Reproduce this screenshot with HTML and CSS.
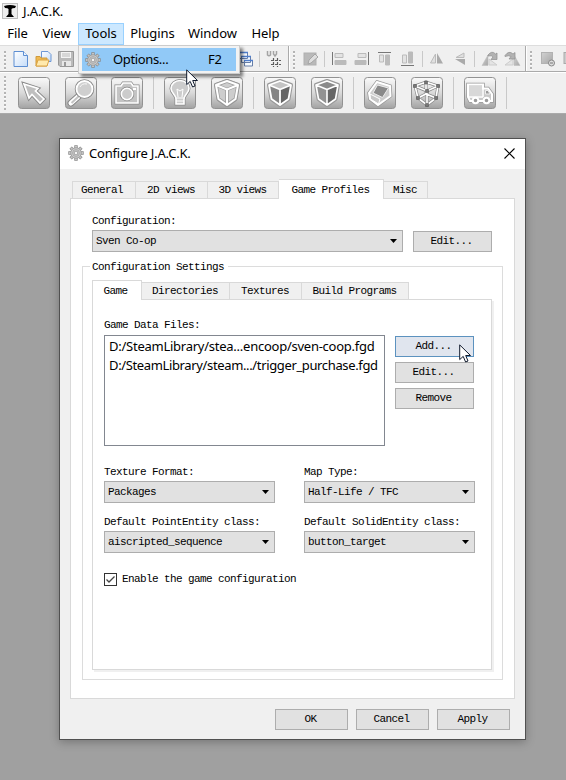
FILE: index.html
```
<!DOCTYPE html>
<html lang="en">
<head>
<meta charset="utf-8">
<title>J.A.C.K.</title>
<link rel="stylesheet" href="styles.css">
</head>
<body>
<svg width="0" height="0" class="defs">
  <defs>
    <linearGradient id="btn" x1="0" y1="0" x2="0" y2="1"><stop offset="0" stop-color="#fafafa"/><stop offset=".5" stop-color="#d9d9d9"/><stop offset="1" stop-color="#a2a2a2"/></linearGradient>
    <linearGradient id="gray" x1="0" y1="0" x2="1" y2="1"><stop offset="0" stop-color="#d2d2d2"/><stop offset="1" stop-color="#a6a6a6"/></linearGradient>
    <linearGradient id="page" x1="0" y1="0" x2="1" y2="1"><stop offset="0" stop-color="#fff"/><stop offset="1" stop-color="#c5dcf8"/></linearGradient>
    <g id="frame"><rect x=".5" y=".5" width="31" height="31" rx="3" fill="url(#btn)" stroke="#929292"/></g>
    <g id="gear">
      <g fill="none" stroke="#8b8b8b" stroke-width="3.4"><path d="M8 .3V15.7M.3 8H15.7M2.6 2.6L13.4 13.4M13.4 2.6L2.6 13.4"/></g>
      <g fill="none" stroke="#c4c4c4" stroke-width="2"><path d="M8 1V15M1 8H15M3 3L13 13M13 3L3 13"/></g>
      <circle cx="8" cy="8" r="5.3" fill="#c9c9c9" stroke="#999" stroke-width=".8"/>
      <circle cx="8" cy="8" r="3.3" fill="#dedede" stroke="#999" stroke-width=".8"/>
      <circle cx="8" cy="8" r="1.9" fill="#f4f4f4" stroke="#888" stroke-width=".8"/>
    </g>
    <path id="cube-edge" d="M5 8L16 4L27 8L24.500 22L16 28L7.500 22ZM5 8L16 12.500L27 8M16 12.500V28" fill="none" stroke-linejoin="round"/>
    <path id="pointer" d="M.7 .9V15.600L4.200 12.400L6.600 18L9 17L6.700 11.500H11.500Z" fill="#fff" stroke="#111b2e" stroke-width="1"/>
  </defs>
</svg>

<div class="app">
  <header class="titlebar">
    <svg width="16" height="16" viewBox="0 0 16 16"><rect x=".5" y=".5" width="15" height="15" fill="#eee" stroke="#888" stroke-dasharray="1 1"/><path d="M2 3Q8 1 14 3L13 5Q10 5 9.500 6L9.500 11L12 14H4L6.500 11V6Q6 5 3 5Z" fill="#000"/></svg>
    <span class="ui app-name">J.A.C.K.</span>
  </header>
  <nav class="menubar ui">
    <span class="m-file">File</span><span class="m-view">View</span><span class="m-tools">Tools</span><span class="m-plug">Plugins</span><span class="m-win">Window</span><span class="m-help">Help</span>
    <div class="dropdown">
      <div class="menu-item"><svg width="16" height="16"><use href="#gear"/></svg><span class="opt">Options...</span><span class="key">F2</span></div>
    </div>
    <svg class="cursor menu-cursor" width="13" height="19"><use href="#pointer"/></svg>
  </nav>

  <div class="toolbar small">
    <div class="tool-section first">
      <i class="grip"></i>
      <svg class="new" width="16" height="16"><path d="M1 .5H10.500L14.500 4.500V15.500H1Z" fill="url(#page)" stroke="#5d8ed2"/><path d="M10.500 .5V4.500H14.500" fill="#edf5ff" stroke="#5d8ed2"/></svg>
      <svg class="open" width="17" height="16"><path d="M6.500 .5H13L16 3.500V10.500H6.500Z" fill="url(#page)" stroke="#6d97d4"/><path d="M1 15V5.500H5L6 7H12V15Z" fill="#efb951" stroke="#cf9a3c"/><path d="M1 15L3 9H14L12 15Z" fill="#ffe9ad" stroke="#dba445"/></svg>
      <svg class="save" width="16" height="16"><path d="M.5 .5H15.500V15.500H2L.5 14Z" fill="#bbb" stroke="#989898"/><path d="M3 1H13V7H3Z" fill="#f4f4f4"/><path d="M4 3H12M4 5H12" stroke="#bbb"/><path d="M4 10H13V15H4Z" fill="#e7e7e7"/><path d="M6 11H8V15H6Z" fill="#999"/></svg>
      <svg class="cascade" width="16" height="16"><g fill="#f7fbff" stroke="#667ea8"><path d="M.5 1.500H9.500V7.500H.5ZM3.500 5.500H12.500V11.500H3.500ZM6.500 9.500H14.500V15H6.500Z"/></g><path d="M0 1.500H10M3 5.500H13M6 9.500H15" stroke="#4e7ecd" stroke-width="1.500"/></svg>
      <i class="sep"></i>
      <svg class="uv" width="16" height="16"><g fill="none" stroke="#a4a4a4" stroke-width="1.500"><path d="M1.500 0V4Q3 5.500 4.500 4V0M7.500 0V3L9 5L10.500 3V0"/></g><path d="M7.500 7V16M11.500 7V16M5 9.500H15M5 13.500H15" stroke="#5c5c5c" stroke-width="1.200" stroke-dasharray="3 1"/></svg>
    </div>
    <div class="tool-section second">
      <i class="grip"></i>
      <svg class="edit" width="16" height="16"><rect x="1" y="2" width="12" height="12" fill="#b9b9b9" stroke="#b0b0b0"/><path d="M5 13L6 9L12 3L15 6L8 12Z" fill="#dedede" stroke="#a5a5a5"/></svg>
      <i class="sep s1"></i>
      <svg class="a1" width="16" height="16"><path d="M1.500 1V14" stroke="#777"/><g stroke="#bbb"><path d="M4 2.500H12V6.500H4Z" fill="#e3e3e3"/><path d="M4 9.500H15V13.500H4Z" fill="#bbb"/></g></svg>
      <svg class="a2" width="16" height="16"><path d="M14.500 1V14" stroke="#777"/><g stroke="#bbb"><path d="M4 2.500H12V6.500H4Z" fill="#e3e3e3"/><path d="M1 9.500H12V13.500H1Z" fill="#bbb"/></g></svg>
      <svg class="a3" width="16" height="16"><path d="M1 1.500H14" stroke="#777"/><g stroke="#bbb"><path d="M2.500 4H6.500V11H2.500Z" fill="#e3e3e3"/><path d="M8.500 4H12.500V14H8.500Z" fill="#bbb"/></g></svg>
      <svg class="a4" width="16" height="16"><path d="M1 14.500H14" stroke="#777"/><g stroke="#bbb"><path d="M2.500 4H6.500V12H2.500Z" fill="#e3e3e3"/><path d="M8.500 1H12.500V12H8.500Z" fill="#bbb"/></g></svg>
      <i class="sep s2"></i>
      <svg class="f1" width="16" height="16"><path d="M6.500 3V12H1.500Z" fill="#e0e0e0" stroke="#bbb"/><path d="M8 2L14 12.500H8Z" fill="#aaa"/></svg>
      <svg class="f2" width="16" height="16"><path d="M11 2V6.500H3Z" fill="#e0e0e0" stroke="#bbb"/><path d="M2 8H12V14Z" fill="#aaa"/></svg>
      <i class="sep s3"></i>
      <svg class="r1" width="17" height="16"><path d="M1 14.500H7V4Z" fill="url(#gray)" stroke="#bbb" stroke-width=".5"/><path d="M8 14V8L16 14Z" fill="#e4e4e4" stroke="#ccc"/><path d="M7 4Q11 -1 14.500 3L16 2V8.500H10L12 6Q11 4 7 5Z" fill="#b2b2b2" stroke="#8e8e8e" stroke-width=".7"/></svg>
      <svg class="r2" width="17" height="16"><path d="M16 14.500H10V4Z" fill="url(#gray)" stroke="#bbb" stroke-width=".5"/><path d="M9 14V8L1 14Z" fill="#e4e4e4" stroke="#ccc"/><path d="M1 4.500Q5 -1 9 3L11 1.500V8H5L7 5.500Q5 4 1 5.500Z" fill="#b2b2b2" stroke="#8e8e8e" stroke-width=".7"/></svg>
    </div>
    <div class="tool-section third">
      <i class="grip"></i>
      <svg class="g1" width="16" height="16"><rect x="1.500" y="1.500" width="11" height="11" fill="url(#gray)" stroke="#b2b2b2"/><circle cx="11.500" cy="12" r="3" fill="#ddd" stroke="#888"/><path d="M10 12H13" stroke="#777"/></svg>
      <svg class="g2" width="16" height="16"><rect x="1" y="1.500" width="11" height="11" fill="#ccc" stroke="#aaa"/></svg>
    </div>
  </div>

  <div class="toolbar large">
    <i class="grip"></i>
    <div class="tools">
      <svg width="32" height="32"><use href="#frame"/><path d="M6 7L20 11.500L17.500 14L26 22L22 26L14 17.500L11 21Z" fill="#bbb" stroke="#888" stroke-width="3.500"/><path d="M6 7L20 11.500L17.500 14L26 22L22 26L14 17.500L11 21Z" fill="#bfbfbf" stroke="#fff" stroke-width="1.700"/></svg>
      <svg width="32" height="32"><use href="#frame"/><path d="M15 18L6 26" stroke="#888" stroke-width="7" stroke-linecap="round"/><path d="M15 18L6 26" stroke="#fff" stroke-width="5" stroke-linecap="round"/><path d="M14 19L6.500 26" stroke="#c4c4c4" stroke-width="2"/><circle cx="19.500" cy="12" r="8" fill="#ccc" stroke="#888" stroke-width="3.500"/><circle cx="19.500" cy="12" r="8" fill="#cfcfcf" stroke="#fff" stroke-width="1.800"/><path d="M15 10Q17 6 22 7" fill="none" stroke="#f7f7f7"/></svg>
      <svg width="32" height="32"><use href="#frame"/><path d="M5 9H10L12 6H20L22 9H27V26H5Z" fill="#c4c4c4" stroke="#888" stroke-width="3"/><path d="M5 9H10L12 6H20L22 9H27V26H5Z" fill="#c4c4c4" stroke="#fff" stroke-width="1.600"/><circle cx="16" cy="17" r="5.700" fill="#bbb" stroke="#888" stroke-width="3"/><circle cx="16" cy="17" r="5.700" fill="#ccc" stroke="#fff" stroke-width="1.600"/><path d="M22 12H25" stroke="#fff" stroke-width="2"/></svg>
    </div>
    <i class="sep"></i>
    <div class="tools">
      <svg width="32" height="32"><use href="#frame"/><path d="M12 22C12 18 7 16 7 11.500A9 8 0 0 1 25 11.500C25 16 20 18 20 22V27H12Z" fill="#ccc" stroke="#888" stroke-width="3"/><path d="M12 22C12 18 7 16 7 11.500A9 8 0 0 1 25 11.500C25 16 20 18 20 22V27H12Z" fill="#ccc" stroke="#fff" stroke-width="1.600"/><path d="M12 21H20M12 24H20M14 20L13 12L16 14L19 12L18 20" fill="none" stroke="#fff"/></svg>
      <svg width="32" height="32"><use href="#frame"/><use href="#cube-edge" stroke="#8f8f8f" stroke-width="4"/><path d="M5 8L16 4L27 8L24.500 22L16 28L7.500 22Z" fill="#cdcdcd"/><use href="#cube-edge" stroke="#9c9c9c" stroke-width="3.500"/><use href="#cube-edge" stroke="#fff" stroke-width="2"/></svg>
    </div>
    <i class="sep"></i>
    <div class="tools">
      <svg width="32" height="32"><use href="#frame"/><use href="#cube-edge" stroke="#999" stroke-width="4"/><path d="M5 8L16 4L27 8L16 12.500Z" fill="#c4c4c4"/><path d="M5 8L16 12.500V28L7.500 22Z" fill="#858585"/><path d="M27 8L16 12.500V28L24.500 22Z" fill="#666"/><use href="#cube-edge" stroke="#fff" stroke-width="1.800"/></svg>
      <svg width="32" height="32"><use href="#frame"/><use href="#cube-edge" stroke="#999" stroke-width="4"/><path d="M5 8L16 4L27 8L16 12.500Z" fill="#8a8a8a"/><path d="M5 8L16 12.500V28L7.500 22Z" fill="#929292"/><path d="M27 8L16 12.500V28L24.500 22Z" fill="#666"/><use href="#cube-edge" stroke="#fff" stroke-width="1.600"/></svg>
    </div>
    <i class="sep"></i>
    <div class="tools">
      <svg width="32" height="32"><use href="#frame"/><path d="M13 5L26 9L26.500 19L14 28L6 22L5 16Z" fill="#bbb" stroke="#999" stroke-width="3.500"/><path d="M13 5L26 9L26.500 19L14 28L6 22L5 16Z" fill="#ccc" stroke="#fff" stroke-width="2"/><path d="M13.500 8L24.500 11L18.500 20.500L9 16Z" fill="#8a8a8a" stroke="#eee"/><path d="M6 17L16 22L14.500 27L6.500 22Z" fill="#c7c7c7" stroke="#fff"/></svg>
      <svg width="32" height="32"><use href="#frame"/><path d="M4 9L15 5L27 9L25 21L16 28L7 21ZM4 9L16 14L27 9M16 14V28M7 21L15 17L25 21M15 5V17" fill="none" stroke="#888" stroke-width="3"/><path d="M4 9L15 5L27 9L25 21L16 28L7 21ZM4 9L16 14L27 9M16 14V28M7 21L15 17L25 21M15 5V17" fill="none" stroke="#fff" stroke-width="1.600"/><path d="M2.500 7.500h3v3h-3zM13.500 4h3v3h-3zM25.500 7.500h3v3h-3zM14.500 12.500h3v3h-3zM5.500 19.500h3v3h-3zM23.500 19.500h3v3h-3zM14.500 26.500h3v3h-3z" fill="#777" stroke="#555" stroke-width=".6"/></svg>
    </div>
    <i class="sep"></i>
    <svg width="32" height="32"><use href="#frame"/><path d="M4 7.500H19V11.500H24L28 17V24H6L4 20Z" fill="#bbb" stroke="#999" stroke-width="3.500"/><path d="M4 7.500H19V11.500H24L28 17V24H6L4 20Z" fill="#c8c8c8" stroke="#fff" stroke-width="2"/><path d="M5 8.500H18V19H5Z" fill="#d8d8d8"/><path d="M19 11V20M4 20H19" stroke="#fff" stroke-width="1.500"/><path d="M21.500 13.500H24L26 17H21.500Z" fill="#999" stroke="#eee"/><g fill="#999" stroke="#fff" stroke-width="2"><circle cx="11.500" cy="23.500" r="2.800"/><circle cx="22.500" cy="23.500" r="2.800"/></g></svg>
    <i class="sep last"></i>
  </div>

  <main class="workspace">
    <section class="dialog">
      <div class="dialog-title"><svg width="16" height="16"><use href="#gear"/></svg><span class="ui d-name">Configure J.A.C.K.</span><svg class="close" width="11" height="11"><path d="M.5 .5L10.500 10.500M10.500 .5L.5 10.500" stroke="#000" stroke-width="1.100"/></svg></div>
      <div class="tabs outer"><span class="t-gen">General</span><span class="t-2d">2D views</span><span class="t-3d">3D views</span><span class="t-prof on">Game Profiles</span><span class="t-misc">Misc</span></div>
      <div class="pane">
        <div class="label">Configuration:</div>
        <div class="config-row"><div class="combo">Sven Co-op</div><div class="button">Edit...</div></div>
        <div class="group">
          <div class="legend">Configuration Settings</div>
          <div class="tabs inner"><span class="t-game on">Game</span><span class="t-dir">Directories</span><span class="t-tex">Textures</span><span class="t-build">Build Programs</span></div>
          <div class="subpane">
            <div class="label">Game Data Files:</div>
            <div class="files">
              <div class="list ui"><div class="l1">D:/SteamLibrary/stea...encoop/sven-coop.fgd</div><div class="l2">D:/SteamLibrary/steam.../trigger_purchase.fgd</div></div>
              <div class="file-buttons"><div class="button hot">Add...<svg class="cursor" width="13" height="19"><use href="#pointer"/></svg></div><div class="button">Edit...</div><div class="button">Remove</div></div>
            </div>
            <div class="fields">
              <div><div class="label">Texture Format:</div><div class="combo">Packages</div></div>
              <div><div class="label">Map Type:</div><div class="combo">Half-Life / TFC</div></div>
              <div><div class="label">Default PointEntity class:</div><div class="combo">aiscripted_sequence</div></div>
              <div><div class="label">Default SolidEntity class:</div><div class="combo">button_target</div></div>
            </div>
            <div class="check"><svg width="13" height="13"><rect x=".5" y=".5" width="12" height="12" fill="#fff" stroke="#333"/><path d="M2.500 6.500L5 9L10.500 3.500" fill="none" stroke="#444" stroke-width="1.300"/></svg><span>Enable the game configuration</span></div>
          </div>
        </div>
      </div>
      <div class="actions"><div class="button">OK</div><div class="button">Cancel</div><div class="button">Apply</div></div>
    </section>
  </main>
</div>
</body>
</html>
```
FILE: styles.css
```
* { box-sizing: border-box; }
body { margin: 0; overflow: hidden; background: #a0a0a0; color: #000; }
svg { display: block; flex: none; }
.defs { position: absolute; }
.app { width: 566px; height: 780px; overflow: hidden; font: 11px/16px "Liberation Mono", monospace; letter-spacing: -.6px; white-space: nowrap; }
.ui { font: 13px/18px "Noto Sans", sans-serif; letter-spacing: -.3px; }

.titlebar { height: 23px; background: #fff; display: flex; padding: 3px 0 0 2px; }
.app-name { margin-left: 5px; line-height: 17px; letter-spacing: -.15px; }
.menubar { position: relative; height: 22px; background: #fff; display: flex; line-height: 21px; }
.menubar > span { text-align: center; flex: none; letter-spacing: -.05px; }
.m-file { width: 35px; }
.m-view { width: 43px; }
.m-tools { width: 46px; background: #cce8ff; border: 1px solid #99d1ff; line-height: 19px; }
.m-plug { width: 57px; }
.m-win { width: 63px; }
.m-help { width: 43px; }
.dropdown { position: absolute; z-index: 2; left: 78px; top: 22px; width: 162px; height: 29px; background: #f2f2f2; border: 1px solid #ccc; padding: 2px 3px; box-shadow: 3px 3px 3px #0007; }
.menu-item { height: 23px; display: flex; align-items: center; background: #91c9f7; padding-left: 3px; line-height: 21px; }
.opt { margin-left: 12px; width: 95px; letter-spacing: -.35px; }
.key { letter-spacing: -.3px; }
.cursor { position: absolute; z-index: 4; }
.menu-cursor { left: 186px; top: 46px; }

.toolbar { display: flex; background: #f0f0f0; }
.small { height: 27px; border-top: 1px solid #ddd; border-bottom: 1px solid #aaa; }
.large { height: 42px; border-top: 1px solid #fff; border-bottom: 1px solid #aaa; padding-top: 4px; }
.tool-section { display: flex; flex: none; height: 25px; padding-top: 5px; border-right: 1px solid #aaa; }
.tool-section + .tool-section { border-left: 1px solid #fff; }
.first { width: 289px; }
.second { width: 237px; }
.third { width: 60px; }
.grip { flex: none; width: 2px; height: 19px; margin-left: 4px; margin-right: 1px; background: repeating-linear-gradient(#b4b4b4 0 2px, #fafafa 2px 3px, #f0f0f0 3px 4px); }
.large .grip { height: 34px; margin-top: -1px; margin-right: 12px; }
.sep { flex: none; width: 1px; height: 16px; background: #c9c9c9; }
.new { margin-left: 6px; }
.open { margin-left: 6px; }
.save { margin-left: 6px; }
.cascade { margin-left: 164px; }
.first .sep { margin-left: 5px; }
.uv { margin-left: 6px; }
.second .grip { margin-left: 3px; }
.edit { margin-left: 7px; }
.s1 { margin-left: 5px; }
.a1 { margin-left: 6px; }
.a2, .a3, .a4 { margin-left: 7px; }
.s2 { margin-left: 6px; }
.f1 { margin-left: 6px; }
.f2 { margin-left: 8px; }
.s3 { margin-left: 5px; }
.r1 { margin-left: 6px; }
.r2 { margin-left: 6px; }
.third .grip { margin-left: 3px; }
.g1 { margin-left: 7px; }
.g2 { margin-left: 7px; }
.tools { display: flex; flex: none; gap: 15px; }
.tools:nth-child(2) { gap: 14.5px; }
.large > .sep { height: 32px; margin: 0 10px; }

.workspace { padding: 24px 0 0 59px; height: 666px; background: #a0a0a0; }
.dialog { width: 467px; height: 602px; border: 1px solid #505050; background: #f0f0f0; box-shadow: 0 2px 9px #0004; }
.dialog-title { height: 30px; background: #fff; display: flex; padding: 6px 10px 0 8px; }
.d-name { margin-left: 5px; letter-spacing: -.2px; line-height: 17px; }
.close { margin: 3px 0 0 auto; }
.tabs { display: flex; align-items: flex-end; height: 19px; position: relative; }
.tabs span { flex: none; height: 17px; border: 1px solid #d9d9d9; border-bottom: 0; border-left: 0; background: #f0f0f0; text-align: center; line-height: 17px; padding-right: 1px; }
.tabs span:first-child { border-left: 1px solid #d9d9d9; }
.tabs .on { height: 20px; margin-bottom: -1px; background: #fff; line-height: 21px; }
.outer { margin: 10px 0 0 12px; }
.tabs .t-gen { width: 64px; padding-right: 4px; }
.t-2d { width: 72px; }
.t-3d { width: 71px; }
.t-prof { width: 105px; }
.t-misc { width: 44px; }
.pane { width: 445px; height: 501px; margin-left: 10px; padding: 14px 10px 0 11px; border: 1px solid #d9d9d9; background: #fff; }
.label { height: 16px; }
.pane > .label, .config-row { margin-left: 10px; }
.config-row { display: flex; gap: 10px; margin-top: 1px; align-items: flex-end; }
.combo { position: relative; height: 22px; border: 1px solid #adadad; background: #e1e1e1; padding-left: 3px; line-height: 21px; }
.config-row .combo { width: 311px; }
.combo::after { content: ""; position: absolute; right: 5px; top: 8px; width: 7px; height: 4px; background: #000; clip-path: polygon(0 0, 100% 0, 50% 100%); }
.button { position: relative; width: 79px; height: 21px; border: 1px solid #adadad; background: #e1e1e1; text-align: center; line-height: 19px; padding-right: 2px; }
.group { width: 421px; height: 414px; margin-top: 14px; border: 1px solid #dcdcdc; padding-left: 9px; }
.legend { width: 138px; height: 16px; margin: -8px 0 0 -2px; padding-left: 2px; background: #fff; }
.inner { margin-top: 5px; }
.tabs .t-game { width: 50px; padding-right: 3px; }
.t-dir { width: 88px; }
.t-tex { width: 72px; }
.t-build { width: 107px; }
.subpane { width: 400px; height: 371px; border: 1px solid #d9d9d9; box-shadow: 2px 2px #f0f0f0; padding: 17px 15px 0 11px; }
.files { display: flex; gap: 10px; margin-top: 2px; }
.list { width: 281px; height: 111px; border: 1px solid #828790; padding: 1px 4px; line-height: 19px; }
.l1 { letter-spacing: -.25px; }
.l2 { letter-spacing: -.36px; }
.file-buttons { display: grid; align-content: start; gap: 5px; padding-top: 1px; }
.hot { border-color: #5c92bf; background: #e0e5ee; }
.hot .cursor { left: 63px; top: 7px; }
.fields { display: grid; grid-template-columns: 171px 171px; gap: 12px 29px; margin-top: 18px; }
.fields > div { height: 38px; }
.fields .label { height: 17px; }
.check { display: flex; gap: 5px; margin-top: 21px; line-height: 13px; }
.actions { display: flex; gap: 8px; margin: 10px 0 0 215px; }
.actions .button { width: 73px; }
```
